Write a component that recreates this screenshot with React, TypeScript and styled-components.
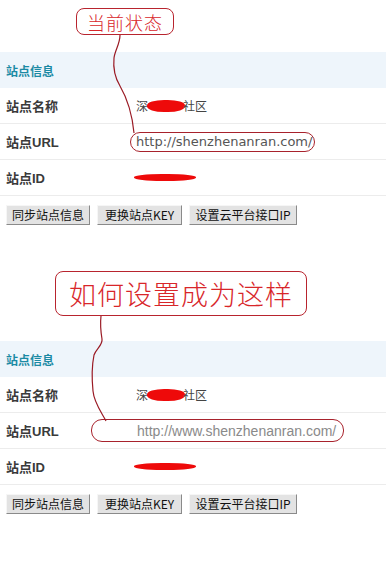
import styled, { createGlobalStyle } from "styled-components";

const GlobalStyle = createGlobalStyle`
  html, body {
    margin: 0;
    padding: 0;
    background: #ffffff;
  }
  body {
    font-family: "Liberation Sans", "Noto Sans CJK SC", sans-serif;
    font-size: 13px;
    color: #333;
  }
`;

const Page = styled.div`
  width: 386px;
  height: 562px;
  overflow: hidden;
  background: #fff;
`;

const Section = styled.div<{ top: number }>`
  position: relative;
  padding-top: ${(p) => p.top}px;
`;

const CalloutRow = styled.div<{ left: number; gap: number }>`
  display: flex;
  padding-left: ${(p) => p.left}px;
  margin-bottom: ${(p) => p.gap}px;
`;

const Callout = styled.div<{ w: number; h: number; size: number }>`
  box-sizing: border-box;
  width: ${(p) => p.w}px;
  height: ${(p) => p.h}px;
  border: 1px solid #b8242e;
  border-radius: 8px;
  display: flex;
  align-items: center;
  justify-content: center;
  color: #d8262a;
  font-family: "Noto Sans CJK SC", sans-serif;
  font-weight: 300;
  font-size: ${(p) => p.size}px;
  letter-spacing: 1px;
  line-height: 1;
`;

const Table = styled.div`
  width: 386px;
`;

const HeaderRow = styled.div`
  height: 36px;
  background: #eef5fb;
  display: flex;
  align-items: center;
  padding-left: 6px;
  color: #1b8aa4;
  font-weight: bold;
  font-family: "Noto Sans CJK SC", sans-serif;
  font-size: 12px;
`;

const Row = styled.div`
  box-sizing: border-box;
  height: 36px;
  display: grid;
  grid-template-columns: 130px 1fr;
  align-items: center;
  padding-left: 6px;
  border-bottom: 1px solid #ececec;
`;

const Label = styled.div`
  font-family: "Liberation Sans", "Noto Sans CJK SC", sans-serif;
  font-weight: bold;
  font-size: 13px;
  color: #3a3a3a;
`;

const Value = styled.div`
  display: flex;
  align-items: center;
  font-family: "Noto Sans CJK SC", sans-serif;
  font-size: 12px;
  color: #444;
`;

const Blot = styled.span<{ w: number; h: number }>`
  display: inline-block;
  width: ${(p) => p.w}px;
  height: ${(p) => p.h}px;
  background: #ee0a0a;
  border-radius: 45%;
`;

const Oval = styled.span<{ pl: number; pr: number; ml: number; h: number; light?: boolean }>`
  display: inline-flex;
  align-items: center;
  box-sizing: border-box;
  height: ${(p) => p.h}px;
  margin-left: ${(p) => p.ml}px;
  padding: 0 ${(p) => p.pr}px 0 ${(p) => p.pl}px;
  border: 1px solid #a8222c;
  border-radius: 11px;
  font-family: ${(p) =>
    p.light ? `"Liberation Sans", Arial, sans-serif` : `"DejaVu Sans", Verdana, sans-serif`};
  font-size: ${(p) => (p.light ? 14 : 13)}px;
  color: ${(p) => (p.light ? "#8a8a8a" : "#555")};
`;

const ButtonRow = styled.div`
  display: flex;
  gap: 7px;
  padding: 9px 0 0 6px;
`;

const Button = styled.button<{ w: number }>`
  box-sizing: border-box;
  width: ${(p) => p.w}px;
  height: 20px;
  padding: 0;
  background: #e3e3e3;
  border: 1px solid;
  border-color: #f6f6f6 #8a8a8a #8a8a8a #f6f6f6;
  font-family: "Noto Sans CJK SC", sans-serif;
  font-size: 12px;
  color: #111;
  line-height: 18px;
`;

const Connector = styled.svg`
  position: absolute;
  left: 0;
  top: 0;
  width: 386px;
  pointer-events: none;
  overflow: visible;
`;

function NameValue() {
  return (
    <Value>
      深<Blot w={38} h={12} style={{ marginLeft: -1, marginRight: -2 }} />社区
    </Value>
  );
}

function InfoTable({ url, light }: { url: string; light?: boolean }) {
  return (
    <Table>
      <HeaderRow>站点信息</HeaderRow>
      <Row>
        <Label>站点名称</Label>
        <NameValue />
      </Row>
      <Row>
        <Label>站点URL</Label>
        <Value>
          {light ? (
            <Oval light ml={-45} pl={45} pr={7} h={23}>
              {url}
            </Oval>
          ) : (
            <Oval ml={-6} pl={5} pr={2} h={20}>
              {url}
            </Oval>
          )}
        </Value>
      </Row>
      <Row>
        <Label>站点ID</Label>
        <Value>
          <Blot w={62} h={7} style={{ marginLeft: -2 }} />
        </Value>
      </Row>
    </Table>
  );
}

function Buttons() {
  return (
    <ButtonRow>
      <Button w={84}>同步站点信息</Button>
      <Button w={85}>更换站点KEY</Button>
      <Button w={108}>设置云平台接口IP</Button>
    </ButtonRow>
  );
}

export default function App() {
  return (
    <Page>
      <GlobalStyle />
      <Section top={8}>
        <CalloutRow left={76} gap={17}>
          <Callout w={98} h={27} size={18}>
            当前状态
          </Callout>
        </CalloutRow>
        <InfoTable url="http://shenzhenanran.com/" />
        <Buttons />
        <Connector height="140" viewBox="0 0 386 140">
          <path
            d="M120 35 C120 44 115 50 114 58 C113 68 114 76 120 86 C127 98 132 112 134 133"
            fill="none"
            stroke="#9a1a24"
            strokeWidth="1.2"
          />
        </Connector>
      </Section>
      <Section top={46}>
        <CalloutRow left={55} gap={25}>
          <Callout w={252} h={45} size={27}>
            如何设置成为这样
          </Callout>
        </CalloutRow>
        <InfoTable url="http://www.shenzhenanran.com/" light />
        <Buttons />
        <Connector height="200" viewBox="0 0 386 200">
          <path
            d="M101 91 C100 100 101 108 102 114 C103 120 96 124 94 130 C92 140 92 156 93 166 C94 178 102 188 106 196"
            fill="none"
            stroke="#9a1a24"
            strokeWidth="1.2"
          />
        </Connector>
      </Section>
    </Page>
  );
}
